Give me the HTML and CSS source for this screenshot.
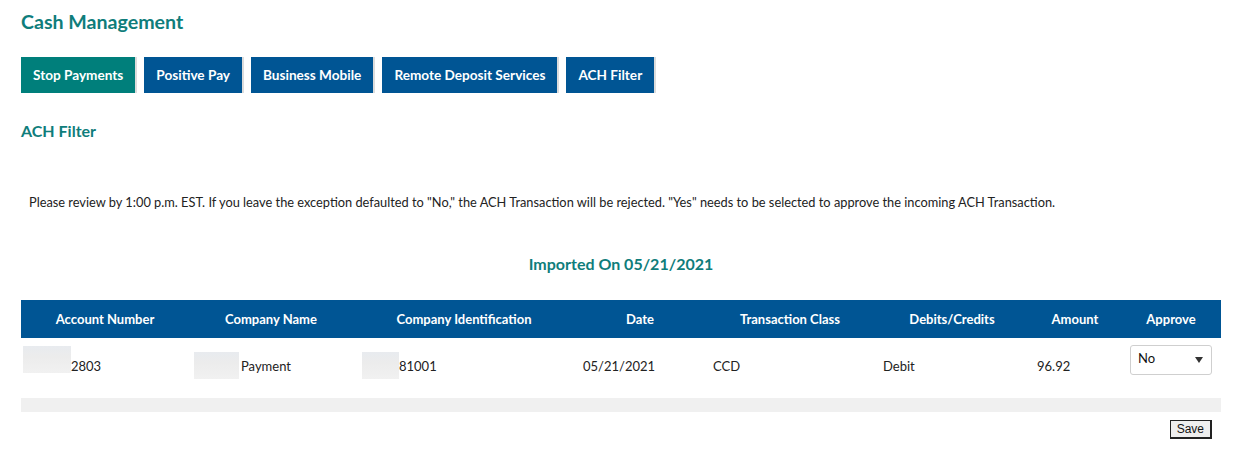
FILE: index.html
```html
<!DOCTYPE html>
<html lang="en">

<head>
    <meta charset="UTF-8">
    <meta name="viewport" content="width=device-width, initial-scale=1.0">
    <title>Cash Management</title>
    <link rel="stylesheet" href="styles.css">
</head>

<body>
<div class="page">
    <h1 class="title">Cash Management</h1>

    <div class="tabs">
        <a class="tab active">Stop Payments</a>
        <a class="tab">Positive Pay</a>
        <a class="tab">Business Mobile</a>
        <a class="tab">Remote Deposit Services</a>
        <a class="tab">ACH Filter</a>
    </div>

    <h2 class="subtitle">ACH Filter</h2>

    <p class="notice">Please review by 1:00 p.m. EST. If you leave the exception defaulted to "No," the ACH Transaction will be rejected. "Yes" needs to be selected to approve the incoming ACH Transaction.</p>

    <h3 class="imported">Imported On 05/21/2021</h3>

    <table class="grid">
        <colgroup>
            <col style="width:168px">
            <col style="width:164px">
            <col style="width:222px">
            <col style="width:130px">
            <col style="width:170px">
            <col style="width:154px">
            <col style="width:92px">
            <col style="width:100px">
        </colgroup>
        <thead>
        <tr>
            <th>Account Number</th>
            <th>Company Name</th>
            <th>Company Identification</th>
            <th>Date</th>
            <th>Transaction Class</th>
            <th>Debits/Credits</th>
            <th>Amount</th>
            <th>Approve</th>
        </tr>
        </thead>
        <tbody>
        <tr class="row">
            <td class="acct"><span class="blur blur-acct"></span>2803</td>
            <td class="comp"><span class="blur blur-name"></span>Payment</td>
            <td class="compid"><span class="blur blur-id"></span>81001</td>
            <td>05/21/2021</td>
            <td>CCD</td>
            <td>Debit</td>
            <td>96.92</td>
            <td class="approve">
                <div class="select"><span>No</span><i class="caret"></i></div>
            </td>
        </tr>
        <tr class="spacer">
            <td colspan="8"></td>
        </tr>
        </tbody>
    </table>

    <div class="actions">
        <button class="save">Save</button>
    </div>
</div>
</body>

</html>
```

FILE: styles.css
```css
* {
    margin: 0;
    padding: 0;
    box-sizing: border-box;
}

body {
    background: #fff;
    font-family: Lato, "Open Sans", sans-serif;
    color: #222;
}

.page {
    padding: 0 21px;
}

.title {
    font-size: 19.6px;
    font-weight: 700;
    color: #0f7d7b;
    line-height: 24px;
    padding-top: 10px;
}

.tabs {
    display: flex;
    margin-top: 23px;
}

.tab {
    display: block;
    height: 36px;
    line-height: 36px;
    padding: 0 12px;
    margin-right: 9px;
    font-size: 13.6px;
    font-weight: 700;
    color: #fff;
    background-color: #005594;
    box-shadow: 2px 0 0 #dcdcdc;
    cursor: pointer;
}

.tab.active {
    background-color: #007f7b;
}

.subtitle {
    font-size: 16px;
    font-weight: 700;
    color: #0f7d7b;
    line-height: 20px;
    margin-top: 28px;
}

.notice {
    font-size: 12.8px;
    line-height: 16px;
    color: #222;
    padding-left: 8px;
    margin-top: 53px;
}

.imported {
    text-align: center;
    font-size: 16px;
    font-weight: 700;
    color: #0f7d7b;
    line-height: 20px;
    margin-top: 44px;
}

.grid {
    width: 1200px;
    table-layout: fixed;
    border-collapse: collapse;
    margin-top: 26px;
    font-size: 13px;
}

.grid th {
    height: 38px;
    background-color: #005594;
    color: #fff;
    font-weight: 700;
    text-align: center;
}

.grid td {
    height: 60px;
    padding: 0 8px 4px;
    line-height: 16px;
    color: #222;
    white-space: nowrap;
}

.grid td.acct {
    padding-left: 2px;
}

.grid td.comp {
    padding-left: 5px;
}

.grid td.compid {
    padding-left: 9px;
}

.grid td.approve {
    vertical-align: top;
    padding: 7px 0 0 9px;
}

.blur {
    display: inline-block;
    vertical-align: top;
    background: linear-gradient(to bottom, #e8ebef, #ececec 40%, #f1f1f1);
}

.blur-acct {
    width: 48px;
    height: 27px;
    margin: -12px 0 1px;
}

.blur-name {
    width: 45px;
    height: 27px;
    margin: -6px 2px -5px 0;
}

.blur-id {
    width: 37px;
    height: 27px;
    margin: -6px 0 -5px;
}

.select {
    position: relative;
    width: 82px;
    height: 30px;
    border: 1px solid #cfcfcf;
    border-radius: 3px;
    padding: 4px 0 0 7px;
    font-size: 13px;
    line-height: 16px;
    color: #111;
}

.caret {
    position: absolute;
    right: 8px;
    top: 11px;
    width: 0;
    height: 0;
    border-left: 4px solid transparent;
    border-right: 4px solid transparent;
    border-top: 6px solid #333;
}

.spacer td {
    height: 14px;
    padding: 0;
    background-color: #f0f0f0;
}

.actions {
    display: flex;
    justify-content: flex-end;
    padding-right: 9px;
    margin-top: 8px;
}

.save {
    font-family: "Liberation Sans", Arial, sans-serif;
    font-size: 12px;
    height: 19px;
    padding: 0 6px;
    border: 1px solid #222;
    border-right-width: 2px;
    border-bottom-width: 2px;
    background: #eee;
    color: #111;
}
```
